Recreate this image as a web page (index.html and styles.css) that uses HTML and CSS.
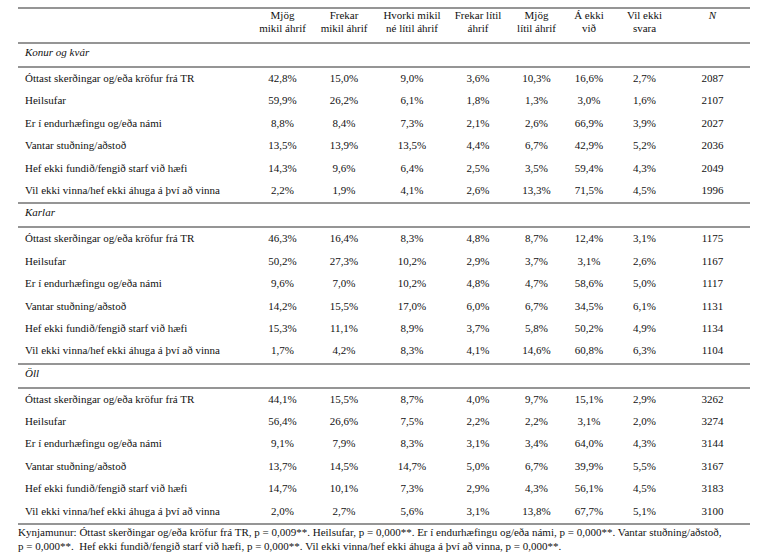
FILE: index.html
```html
<!DOCTYPE html>
<html lang="is">
<head>
<meta charset="utf-8">
<title>Tafla</title>
<link rel="stylesheet" href="styles.css">
</head>
<body>
<div class="wrap">
<table class="tbl">
  <colgroup>
    <col class="c-label">
    <col class="c1"><col class="c2"><col class="c3"><col class="c4">
    <col class="c5"><col class="c6"><col class="c7"><col class="c8">
  </colgroup>
  <thead>
    <tr>
      <th></th>
      <th>Mjög<br>mikil áhrif</th>
      <th>Frekar<br>mikil áhrif</th>
      <th>Hvorki mikil<br>né lítil áhrif</th>
      <th>Frekar lítil<br>áhrif</th>
      <th>Mjög<br>lítil áhrif</th>
      <th>Á ekki<br>við</th>
      <th>Vil ekki<br>svara</th>
      <th><i>N</i></th>
    </tr>
  </thead>
  <tbody>
    <tr class="sec"><td colspan="9">Konur og kvár</td></tr>
    <tr class="first"><td>Óttast skerðingar og/eða kröfur frá TR</td><td>42,8%</td><td>15,0%</td><td>9,0%</td><td>3,6%</td><td>10,3%</td><td>16,6%</td><td>2,7%</td><td>2087</td></tr>
    <tr><td>Heilsufar</td><td>59,9%</td><td>26,2%</td><td>6,1%</td><td>1,8%</td><td>1,3%</td><td>3,0%</td><td>1,6%</td><td>2107</td></tr>
    <tr><td>Er í endurhæfingu og/eða námi</td><td>8,8%</td><td>8,4%</td><td>7,3%</td><td>2,1%</td><td>2,6%</td><td>66,9%</td><td>3,9%</td><td>2027</td></tr>
    <tr><td>Vantar stuðning/aðstoð</td><td>13,5%</td><td>13,9%</td><td>13,5%</td><td>4,4%</td><td>6,7%</td><td>42,9%</td><td>5,2%</td><td>2036</td></tr>
    <tr><td>Hef ekki fundið/fengið starf við hæfi</td><td>14,3%</td><td>9,6%</td><td>6,4%</td><td>2,5%</td><td>3,5%</td><td>59,4%</td><td>4,3%</td><td>2049</td></tr>
    <tr><td>Vil ekki vinna/hef ekki áhuga á því að vinna</td><td>2,2%</td><td>1,9%</td><td>4,1%</td><td>2,6%</td><td>13,3%</td><td>71,5%</td><td>4,5%</td><td>1996</td></tr>

    <tr class="sec"><td colspan="9">Karlar</td></tr>
    <tr class="first"><td>Óttast skerðingar og/eða kröfur frá TR</td><td>46,3%</td><td>16,4%</td><td>8,3%</td><td>4,8%</td><td>8,7%</td><td>12,4%</td><td>3,1%</td><td>1175</td></tr>
    <tr><td>Heilsufar</td><td>50,2%</td><td>27,3%</td><td>10,2%</td><td>2,9%</td><td>3,7%</td><td>3,1%</td><td>2,6%</td><td>1167</td></tr>
    <tr><td>Er í endurhæfingu og/eða námi</td><td>9,6%</td><td>7,0%</td><td>10,2%</td><td>4,8%</td><td>4,7%</td><td>58,6%</td><td>5,0%</td><td>1117</td></tr>
    <tr><td>Vantar stuðning/aðstoð</td><td>14,2%</td><td>15,5%</td><td>17,0%</td><td>6,0%</td><td>6,7%</td><td>34,5%</td><td>6,1%</td><td>1131</td></tr>
    <tr><td>Hef ekki fundið/fengið starf við hæfi</td><td>15,3%</td><td>11,1%</td><td>8,9%</td><td>3,7%</td><td>5,8%</td><td>50,2%</td><td>4,9%</td><td>1134</td></tr>
    <tr><td>Vil ekki vinna/hef ekki áhuga á því að vinna</td><td>1,7%</td><td>4,2%</td><td>8,3%</td><td>4,1%</td><td>14,6%</td><td>60,8%</td><td>6,3%</td><td>1104</td></tr>

    <tr class="sec"><td colspan="9">Öll</td></tr>
    <tr class="first"><td>Óttast skerðingar og/eða kröfur frá TR</td><td>44,1%</td><td>15,5%</td><td>8,7%</td><td>4,0%</td><td>9,7%</td><td>15,1%</td><td>2,9%</td><td>3262</td></tr>
    <tr><td>Heilsufar</td><td>56,4%</td><td>26,6%</td><td>7,5%</td><td>2,2%</td><td>2,2%</td><td>3,1%</td><td>2,0%</td><td>3274</td></tr>
    <tr><td>Er í endurhæfingu og/eða námi</td><td>9,1%</td><td>7,9%</td><td>8,3%</td><td>3,1%</td><td>3,4%</td><td>64,0%</td><td>4,3%</td><td>3144</td></tr>
    <tr><td>Vantar stuðning/aðstoð</td><td>13,7%</td><td>14,5%</td><td>14,7%</td><td>5,0%</td><td>6,7%</td><td>39,9%</td><td>5,5%</td><td>3167</td></tr>
    <tr><td>Hef ekki fundið/fengið starf við hæfi</td><td>14,7%</td><td>10,1%</td><td>7,3%</td><td>2,9%</td><td>4,3%</td><td>56,1%</td><td>4,5%</td><td>3183</td></tr>
    <tr class="last"><td>Vil ekki vinna/hef ekki áhuga á því að vinna</td><td>2,0%</td><td>2,7%</td><td>5,6%</td><td>3,1%</td><td>13,8%</td><td>67,7%</td><td>5,1%</td><td>3100</td></tr>
  </tbody>
</table>
<p class="note">Kynjamunur: Óttast skerðingar og/eða kröfur frá TR, p = 0,009**. Heilsufar, p = 0,000**. Er í endurhæfingu og/eða námi, p = 0,000**. Vantar stuðning/aðstoð,<br>p = 0,000**.&nbsp; Hef ekki fundið/fengið starf við hæfi, p = 0,000**. Vil ekki vinna/hef ekki áhuga á því að vinna, p = 0,000**.</p>
</div>
</body>
</html>
```

FILE: styles.css
```css
html, body {
  margin: 0;
  padding: 0;
  background: #ffffff;
}

body {
  font-family: "Liberation Serif", "Times New Roman", serif;
  font-size: 11px;
  color: #111111;
}

.wrap {
  padding: 7px 18px 0 18px;
  width: 732px;
}

.tbl {
  width: 732px;
  table-layout: fixed;
  border-collapse: separate;
  border-spacing: 0;
}

.c-label { width: 236px; }
.c1 { width: 57px; }
.c2 { width: 66px; }
.c3 { width: 70px; }
.c4 { width: 62px; }
.c5 { width: 55px; }
.c6 { width: 50px; }
.c7 { width: 61px; }
.c8 { width: 75px; }

.tbl th {
  font-weight: normal;
  text-align: center;
  vertical-align: top;
  line-height: 13px;
  padding: 0 0 7px 0;
  border-top: 2px solid #959595;
}

.tbl td {
  text-align: center;
  vertical-align: top;
  line-height: 13px;
  padding: 4px 0 5.4px 0;
  white-space: nowrap;
}

.tbl td:first-child {
  text-align: left;
  padding-left: 7px;
}

.tbl tr.sec td {
  font-style: italic;
  border-top: 2px solid #959595;
  padding: 2px 0 7px 7px;
}

.tbl tr.first td {
  border-top: 2px solid #959595;
}

.tbl tr.last td {
  border-bottom: 2px solid #959595;
}

.note {
  margin: 0;
  line-height: 14px;
  white-space: nowrap;
}
```
